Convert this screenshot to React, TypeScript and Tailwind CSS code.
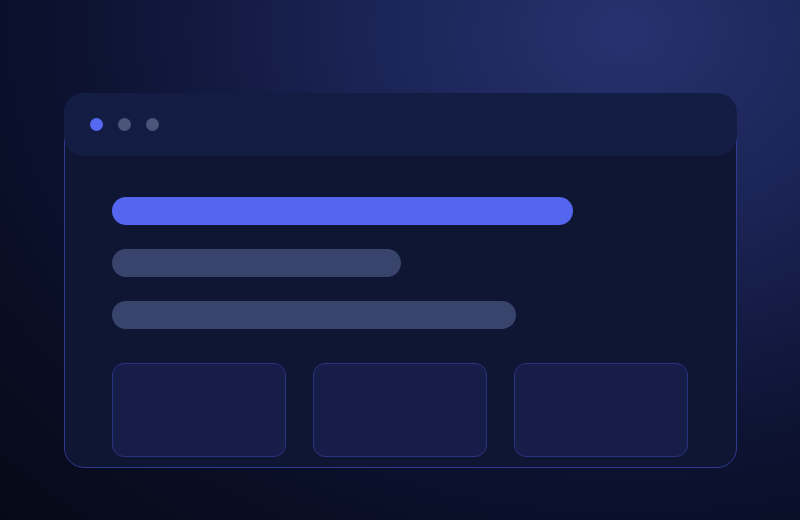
export default function App() {
  return (
    <div className="w-[800px] h-[520px] overflow-hidden bg-[radial-gradient(ellipse_at_78%_6%,#27326f_0%,#1a2354_30%,#0c1230_62%,#060916_100%)] pt-[93px] pl-16">
      {/* window */}
      <div className="w-[673px] h-[375px] rounded-[20px] border border-[#2f3b8f] bg-[#0e1633]">
        <div className="-mx-px -mt-px h-[63px] rounded-[20px] bg-[#131c43] flex items-center gap-[15px] pl-[26px]">
          <span className="w-[13px] h-[13px] rounded-full bg-[#5468f2]" />
          <span className="w-[13px] h-[13px] rounded-full bg-[#4a5579]" />
          <span className="w-[13px] h-[13px] rounded-full bg-[#4a5579]" />
        </div>

        <div className="px-[47px] pt-[41px] flex flex-col">
          <div className="flex flex-col gap-6">
            <div className="h-[28px] w-[461px] rounded-full bg-[#5466f0]" />
            <div className="h-[28px] w-[289px] rounded-full bg-[#38446b]" />
            <div className="h-[28px] w-[404px] rounded-full bg-[#38446b]" />
          </div>

          <div className="mt-[34px] grid grid-cols-3 gap-[27px] w-[576px]">
            <div className="h-[94px] rounded-xl border border-[#29347e] bg-[#151d48]" />
            <div className="h-[94px] rounded-xl border border-[#29347e] bg-[#151d48]" />
            <div className="h-[94px] rounded-xl border border-[#29347e] bg-[#151d48]" />
          </div>
        </div>
      </div>
    </div>
  );
}
